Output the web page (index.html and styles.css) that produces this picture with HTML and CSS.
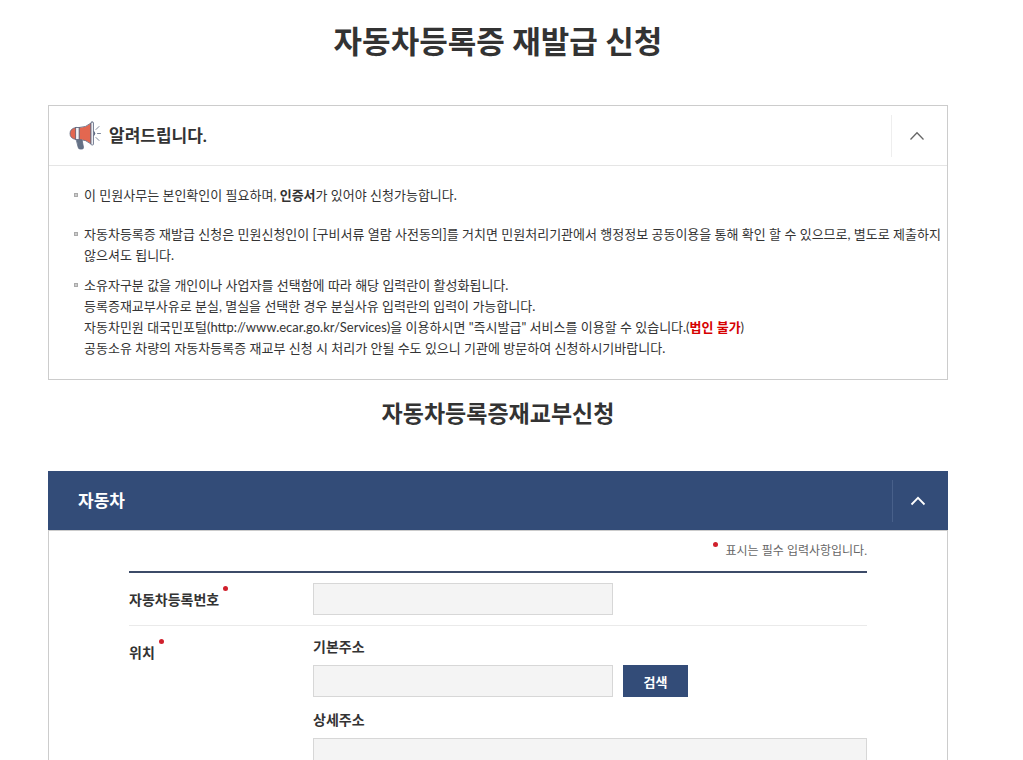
FILE: index.html
```
<!DOCTYPE html>
<html lang="ko">
<head>
    <meta charset="UTF-8">
    <meta name="viewport" content="width=device-width, initial-scale=1.0">
    <title>자동차등록증 재발급 신청</title>
    <link rel="stylesheet" href="styles.css">
</head>
<body>
    <main class="container">
        <h1 class="page-title">자동차등록증 재발급 신청</h1>

        <section class="notice">
            <div class="notice-head">
                <svg class="notice-icon" width="32" height="30" viewBox="0 0 32 30" fill="none" stroke="#5d6880" stroke-width="0.800" stroke-linecap="round" stroke-linejoin="round">
                    <path d="M7.500 18.500 L13 18.500 L14.500 26.500 Q14.500 28 13 28 L11 28 Q9.500 28 9.200 26.500 Z" fill="#657286"/>
                    <path d="M7 6.500 L11 6.500 L11 18.500 L7 18.500 Q1 17.500 1 12.500 Q1 7.500 7 6.500 Z" fill="#e36750"/>
                    <path d="M7 6.500 L10.500 6.500 L10.500 18.500 L7 18.500 Z" fill="#f3f3f5"/>
                    <path d="M10.500 6.500 Q17 6.500 22 2 L22 23 Q17 18.500 10.500 18.500 Z" fill="#e36750"/>
                    <rect x="22" y="1" width="2.500" height="23" rx="1" fill="#eeeef2"/>
                    <path d="M25 10.500 Q27 12.500 25 14.500" fill="#5d6880"/>
                    <path d="M27 8.500 L30 5.500 M28.500 12.500 L31.500 12.500 M27 16.500 L30 19.500"/>
                </svg>
                <h2 class="notice-title">알려드립니다.</h2>
                <button type="button" class="toggle" aria-label="알림 접기" aria-expanded="true">
                    <svg width="16" height="10" viewBox="0 0 16 10" fill="none" stroke="currentColor" stroke-width="1.300"><path d="M1.500 8.500 L8 1.800 L14.500 8.500"/></svg>
                </button>
            </div>
            <ul class="notice-list">
                <li class="notice-first">이 민원사무는 본인확인이 필요하며, <strong>인증서</strong>가 있어야 신청가능합니다.</li>
                <li>자동차등록증 재발급 신청은 민원신청인이 [구비서류 열람 사전동의]를 거치면 민원처리기관에서 행정정보 공동이용을 통해 확인 할 수 있으므로, 별도로 제출하지 않으셔도 됩니다.</li>
                <li>
                    소유자구분 값을 개인이나 사업자를 선택함에 따라 해당 입력란이 활성화됩니다.<br>
                    등록증재교부사유로 분실, 멸실을 선택한 경우 분실사유 입력란의 입력이 가능합니다.<br>
                    자동차민원 대국민포털(http://www.ecar.go.kr/Services)을 이용하시면 "즉시발급" 서비스를 이용할 수 있습니다.(<strong class="warn">법인 불가</strong>)<br>
                    공동소유 차량의 자동차등록증 재교부 신청 시 처리가 안될 수도 있으니 기관에 방문하여 신청하시기바랍니다.
                </li>
            </ul>
        </section>

        <h2 class="form-title">자동차등록증재교부신청</h2>

        <form class="panel">
            <div class="panel-head">
                <h3 class="panel-title">자동차</h3>
                <button type="button" class="toggle" aria-label="자동차 접기" aria-expanded="true">
                    <svg width="16" height="10" viewBox="0 0 16 10" fill="none" stroke="currentColor" stroke-width="1.800"><path d="M1.500 8.500 L8 1.800 L14.500 8.500"/></svg>
                </button>
            </div>
            <div class="panel-body">
                <p class="required-note">표시는 필수 입력사항입니다.</p>
                <div class="rows">
                    <div class="row">
                        <div class="row-head"><label class="required" for="carNo">자동차등록번호</label></div>
                        <div class="fields">
                            <input type="text" id="carNo" class="text short" readonly>
                        </div>
                    </div>
                    <div class="row">
                        <div class="row-head"><span class="required">위치</span></div>
                        <div class="fields">
                            <div class="field">
                                <label for="addr">기본주소</label>
                                <div class="search">
                                    <input type="text" id="addr" class="text short" readonly>
                                    <button type="button" class="btn">검색</button>
                                </div>
                            </div>
                            <div class="field">
                                <label for="addrDetail">상세주소</label>
                                <input type="text" id="addrDetail" class="text" readonly>
                            </div>
                        </div>
                    </div>
                </div>
            </div>
        </form>
    </main>
</body>
</html>
```

FILE: styles.css
```
*, *::before, *::after {
    box-sizing: border-box;
}
body {
    margin: 0;
    background-color: #fff;
    color: #333;
    font-family: Lato, "Noto Sans CJK KR", sans-serif;
    font-size: 13px;
    line-height: 21px;
    word-break: keep-all;
}
h1, h2, h3, p, ul {
    margin: 0;
    padding: 0;
}
button, input {
    font-family: inherit;
}
.container {
    padding: 17px 75px 0 48px;
}
.page-title {
    margin-bottom: 40px;
    font-size: 31px;
    font-weight: 700;
    line-height: 48px;
    text-align: center;
}

/* notice box */
.notice {
    border: 1px solid #ccc;
}
.notice-head {
    display: flex;
    align-items: center;
    height: 60px;
    padding-left: 20px;
    border-bottom: 1px solid #e5e5e5;
}
.notice-icon {
    margin-right: 8px;
}
.notice-title {
    font-size: 17px;
    font-weight: 700;
}
.toggle {
    display: flex;
    align-items: center;
    justify-content: center;
    width: 56px;
    height: 42px;
    margin-left: auto;
    padding: 0 5px 0 0;
    border: 0;
    border-left: 1px solid #eee;
    background: none;
    color: #666;
    cursor: pointer;
}
.notice-list {
    padding: 19px 5px 20px 35px;
    list-style: none;
}
.notice-list li {
    position: relative;
    margin-bottom: 9px;
}
.notice-list li:last-child {
    margin-bottom: 0;
}
.notice-list li::before {
    content: "";
    position: absolute;
    top: 8px;
    left: -10px;
    width: 4px;
    height: 4px;
    border: 1px solid #aaa;
    background-color: #ccc;
}
.notice-list .notice-first {
    margin-bottom: 18px;
}
.warn {
    color: #d60000;
}

/* form */
.form-title {
    margin: 16px 0 41px;
    font-size: 23px;
    font-weight: 700;
    line-height: 34px;
    text-align: center;
}
.panel-head {
    display: flex;
    align-items: center;
    height: 59px;
    padding-left: 30px;
    background-color: #334c78;
    color: #fff;
}
.panel-title {
    font-size: 17px;
    font-weight: 700;
}
.panel-head .toggle {
    border-left-color: #48608a;
    color: #fff;
}
.panel-body {
    padding: 9px 80px 40px;
    border: 1px solid #ccc;
}
.required-note {
    margin-bottom: 10px;
    color: #666;
    font-size: 12px;
    text-align: right;
}
.required-note::before {
    content: "";
    display: inline-block;
    width: 5px;
    height: 5px;
    margin-right: 8px;
    border-radius: 50%;
    background-color: #d0202c;
    vertical-align: 8px;
}
.rows {
    border-top: 2px solid #3c4b68;
}
.row {
    display: grid;
    grid-template-columns: 184px 1fr;
    padding: 10px 0;
    border-bottom: 1px solid #eaeaea;
}
.row-head {
    padding-top: 6px;
}
.row label,
.required {
    font-size: 14px;
    font-weight: 700;
}
.required {
    position: relative;
}
.required::after {
    content: "";
    position: absolute;
    top: -5px;
    right: -9px;
    width: 5px;
    height: 5px;
    border-radius: 50%;
    background-color: #d0202c;
}
.fields {
    display: flex;
    flex-direction: column;
    gap: 12px;
}
.field {
    display: flex;
    flex-direction: column;
    gap: 7px;
}
.field label {
    line-height: 22px;
}
.search {
    display: flex;
    gap: 10px;
}
.text {
    width: 100%;
    height: 32px;
    padding: 0 8px;
    border: 1px solid #d7d7d7;
    background-color: #f4f4f4;
    font-size: 13px;
}
.short {
    max-width: 300px;
}
.btn {
    min-width: 65px;
    padding: 0 20px;
    border: 0;
    background-color: #334c78;
    color: #fff;
    font-size: 13px;
    font-weight: 700;
    cursor: pointer;
}
```
